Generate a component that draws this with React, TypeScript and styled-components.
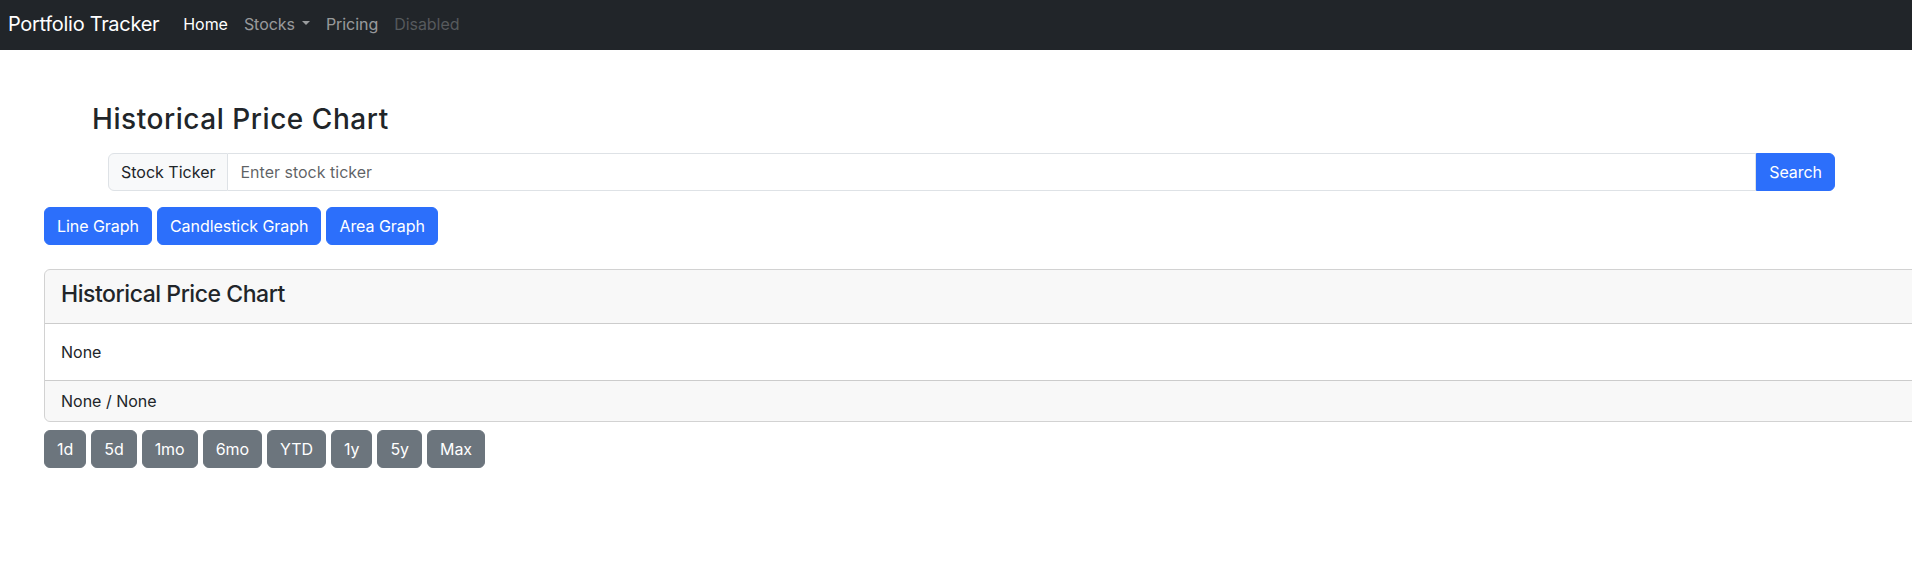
import React from "react";
import styled, { createGlobalStyle } from "styled-components";

const GlobalStyle = createGlobalStyle`
  html, body {
    margin: 0;
    padding: 0;
    overflow: hidden;
    background: #ffffff;
  }
  body {
    font-family: Inter, "Noto Sans", "Liberation Sans", sans-serif;
    font-size: 16px;
    line-height: 1.5;
    color: #212529;
  }
  * { box-sizing: border-box; }
`;

const PRIMARY = "#2c6ffb";
const SECONDARY = "#6c757d";

const NavBar = styled.nav`
  height: 50px;
  background: #212529;
  display: flex;
  align-items: center;
  padding: 0 8px 2px;
`;

const Brand = styled.a`
  font-size: 20px;
  line-height: 30px;
  letter-spacing: -0.3px;
  color: #fff;
  margin-right: 16px;
  text-decoration: none;
  white-space: nowrap;
`;

const NavList = styled.ul`
  display: flex;
  list-style: none;
  margin: 0;
  padding: 0;
`;

const NavLink = styled.a<{ $state?: "active" | "disabled" }>`
  display: flex;
  align-items: center;
  padding: 8px;
  font-size: 16px;
  line-height: 24px;
  letter-spacing: -0.05px;
  text-decoration: none;
  color: ${(p) =>
    p.$state === "active"
      ? "#ffffff"
      : p.$state === "disabled"
      ? "rgba(255,255,255,0.25)"
      : "rgba(255,255,255,0.55)"};
`;

const Caret = styled.span`
  display: inline-block;
  margin-left: 7px;
  width: 0;
  height: 0;
  border-top: 4.8px solid currentColor;
  border-left: 4.8px solid transparent;
  border-right: 4.8px solid transparent;
  margin-top: -2px;
`;

const Main = styled.main`
  padding-left: 44px;
  display: flex;
  flex-direction: column;
  align-items: flex-start;
`;

const Title = styled.h3`
  margin: 53px 0 0 48px;
  font-size: 28px;
  font-weight: 500;
  line-height: 1.2;
  letter-spacing: 0.55px;
`;

const InputGroup = styled.div`
  display: flex;
  width: 1727px;
  margin: 16px 0 0 64px;
  height: 38px;
`;

const Addon = styled.span`
  display: flex;
  align-items: center;
  padding: 0 12px;
  background: #f8f9fa;
  border: 1px solid #dee2e6;
  border-radius: 6px 0 0 6px;
  font-size: 16px;
  white-space: nowrap;
`;

const Input = styled.input`
  flex: 1;
  min-width: 0;
  padding: 0 12px;
  border: 1px solid #dee2e6;
  border-left: none;
  font-family: inherit;
  font-size: 16px;
  color: #212529;
  outline: none;
  &::placeholder {
    color: rgba(33, 37, 41, 0.72);
  }
`;

const Button = styled.button<{ $variant: "primary" | "secondary"; $joined?: boolean }>`
  height: 38px;
  padding: 0 12px;
  border: 1px solid ${(p) => (p.$variant === "primary" ? PRIMARY : SECONDARY)};
  background: ${(p) => (p.$variant === "primary" ? PRIMARY : SECONDARY)};
  color: #fff;
  font-family: inherit;
  font-size: 16px;
  line-height: 24px;
  letter-spacing: -0.05px;
  border-radius: ${(p) => (p.$joined ? "0 6px 6px 0" : "6px")};
  white-space: nowrap;
  cursor: pointer;
`;

const ButtonRow = styled.div<{ $top: number }>`
  display: flex;
  gap: 5px;
  margin-top: ${(p) => p.$top}px;
`;

const Card = styled.section`
  margin-top: 24px;
  width: 1900px;
  border: 1px solid rgba(0, 0, 0, 0.175);
  border-radius: 6px;
  overflow: hidden;
`;

const CardHeader = styled.div`
  padding: 10px 16px 6px;
  background: rgba(33, 37, 41, 0.03);
  border-bottom: 1px solid rgba(0, 0, 0, 0.175);
`;

const CardTitle = styled.h4`
  margin: 0 0 8px 0;
  font-size: 23px;
  font-weight: 500;
  line-height: 29px;
  letter-spacing: -0.45px;
`;

const CardBody = styled.div`
  padding: 16px 16px 16px;
`;

const CardFooter = styled.div`
  padding: 8px 16px 8px;
  background: rgba(33, 37, 41, 0.03);
  border-top: 1px solid rgba(0, 0, 0, 0.175);
`;

const periods = ["1d", "5d", "1mo", "6mo", "YTD", "1y", "5y", "Max"];
const graphs = ["Line Graph", "Candlestick Graph", "Area Graph"];

export default function App() {
  return (
    <>
      <GlobalStyle />
      <NavBar>
        <Brand href="#">Portfolio Tracker</Brand>
        <NavList>
          <li><NavLink $state="active" href="#">Home</NavLink></li>
          <li><NavLink href="#">Stocks<Caret /></NavLink></li>
          <li><NavLink href="#">Pricing</NavLink></li>
          <li><NavLink $state="disabled">Disabled</NavLink></li>
        </NavList>
      </NavBar>
      <Main>
        <Title>Historical Price Chart</Title>
        <InputGroup>
          <Addon>Stock Ticker</Addon>
          <Input placeholder="Enter stock ticker" />
          <Button $variant="primary" $joined>Search</Button>
        </InputGroup>
        <ButtonRow $top={16}>
          {graphs.map((g) => (
            <Button key={g} $variant="primary">{g}</Button>
          ))}
        </ButtonRow>
        <Card>
          <CardHeader>
            <CardTitle>Historical Price Chart</CardTitle>
          </CardHeader>
          <CardBody>None</CardBody>
          <CardFooter>None / None</CardFooter>
        </Card>
        <ButtonRow $top={8}>
          {periods.map((p) => (
            <Button key={p} $variant="secondary">{p}</Button>
          ))}
        </ButtonRow>
      </Main>
    </>
  );
}
